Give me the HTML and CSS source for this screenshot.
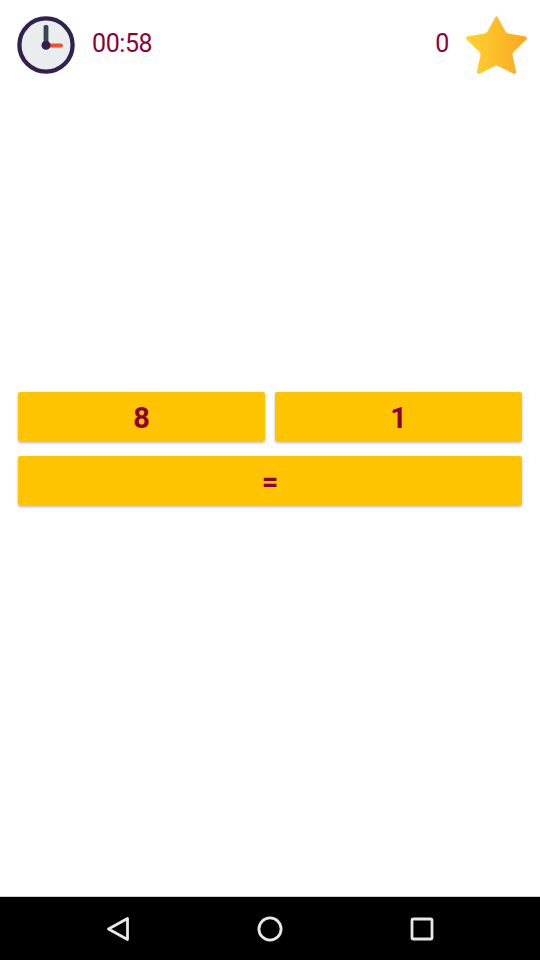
FILE: index.html
```html
<!DOCTYPE html>
<html lang="en">

<head>
    <meta charset="UTF-8">
    <title>Math game</title>
    <link rel="stylesheet" href="styles.css">
</head>

<body>
    <div class="screen">
        <div class="top">
            <svg class="clock" width="60" height="60" viewBox="0 0 60 60">
                <circle cx="30" cy="30" r="26.6" fill="#e9edee" stroke="#32214f" stroke-width="4.300"/>
                <rect x="27.600" y="10" width="4.800" height="20" rx="1.500" fill="#37474f"/>
                <rect x="30" y="28.400" width="17" height="4" rx="2" fill="#ff4a2b"/>
                <circle cx="30" cy="30.300" r="4.500" fill="#32214f"/>
            </svg>
            <span class="time">00:58</span>
            <span class="score">0</span>
            <svg class="star" width="64" height="62" viewBox="0.8 0.6 62.400 60">
                <defs>
                    <linearGradient id="stargrad" x1="0" y1="0" x2="1" y2="0">
                        <stop offset="0" stop-color="#ffd32e"/>
                        <stop offset="1" stop-color="#f9a825"/>
                    </linearGradient>
                </defs>
                <path d="M30.500 5Q32.500 0 34.500 5L41 17Q42 19 44 19.300L60 22Q64 23 61 26L49.500 37Q47.800 38.800 48.200 41L51.500 56Q52 60 48.500 58.500L35 51.500Q32.500 50.300 30 51.500L16.500 58.500Q13 60 13.500 56L16.800 41Q17.200 38.800 15.500 37L4 26Q1 23 5 22L21 19.300Q23 19 24 17Z" fill="url(#stargrad)"/>
            </svg>
        </div>
        <div class="board">
            <div class="row">
                <div class="tile">8</div>
                <div class="tile">1</div>
            </div>
            <div class="tile">=</div>
        </div>
    </div>
    <div class="navbar">
        <svg width="24" height="26" viewBox="0 0 24 26">
            <path d="M21.500 2.500V23.500L2.500 13z" fill="none" stroke="#e8e8e8" stroke-width="2.800" stroke-linejoin="round"/>
        </svg>
        <svg width="26" height="26" viewBox="0 0 26 26">
            <circle cx="13" cy="13" r="11.100" fill="none" stroke="#e8e8e8" stroke-width="2.800"/>
        </svg>
        <svg width="24" height="24" viewBox="0 0 24 24">
            <rect x="2" y="2" width="20" height="20" rx="1.500" fill="none" stroke="#e8e8e8" stroke-width="2.800"/>
        </svg>
    </div>
</body>

</html>
```

FILE: styles.css
```css
* {
    padding: 0px;
    margin: 0px;
    box-sizing: border-box;
}

body {
    width: 540px;
    height: 960px;
    display: flex;
    flex-direction: column;
    background: #fff;
    overflow: hidden;
}

.screen {
    flex: 1;
    display: flex;
    flex-direction: column;
}

.top {
    height: 90px;
    display: flex;
    align-items: center;
    padding: 0 12px 0 16px;
}

.clock {
    margin-right: 16px;
}

.time,
.score {
    font-family: "Roboto", sans-serif;
    font-size: 25px;
    letter-spacing: -0.4px;
    color: #8e0038;
    margin-bottom: 4px;
}

.score {
    margin-left: auto;
    margin-right: 15px;
}

.board {
    margin-top: 302px;
    padding: 0 18px;
    display: flex;
    flex-direction: column;
    gap: 15px;
}

.row {
    display: flex;
    gap: 10px;
}

.row .tile {
    flex: 1;
}

.tile {
    height: 49px;
    padding-top: 2px;
    background: #ffc400;
    border-radius: 2px;
    box-shadow: 0 2px 3px rgba(0, 0, 0, 0.28);
    display: flex;
    align-items: center;
    justify-content: center;
    font-family: "Roboto", sans-serif;
    font-weight: 700;
    font-size: 29px;
    color: #8e0038;
}

.navbar {
    height: 64px;
    flex-shrink: 0;
    background: #000;
    border-top: 1px solid #ccc;
    display: flex;
    align-items: center;
    justify-content: space-between;
    padding: 0 106px;
}
```
